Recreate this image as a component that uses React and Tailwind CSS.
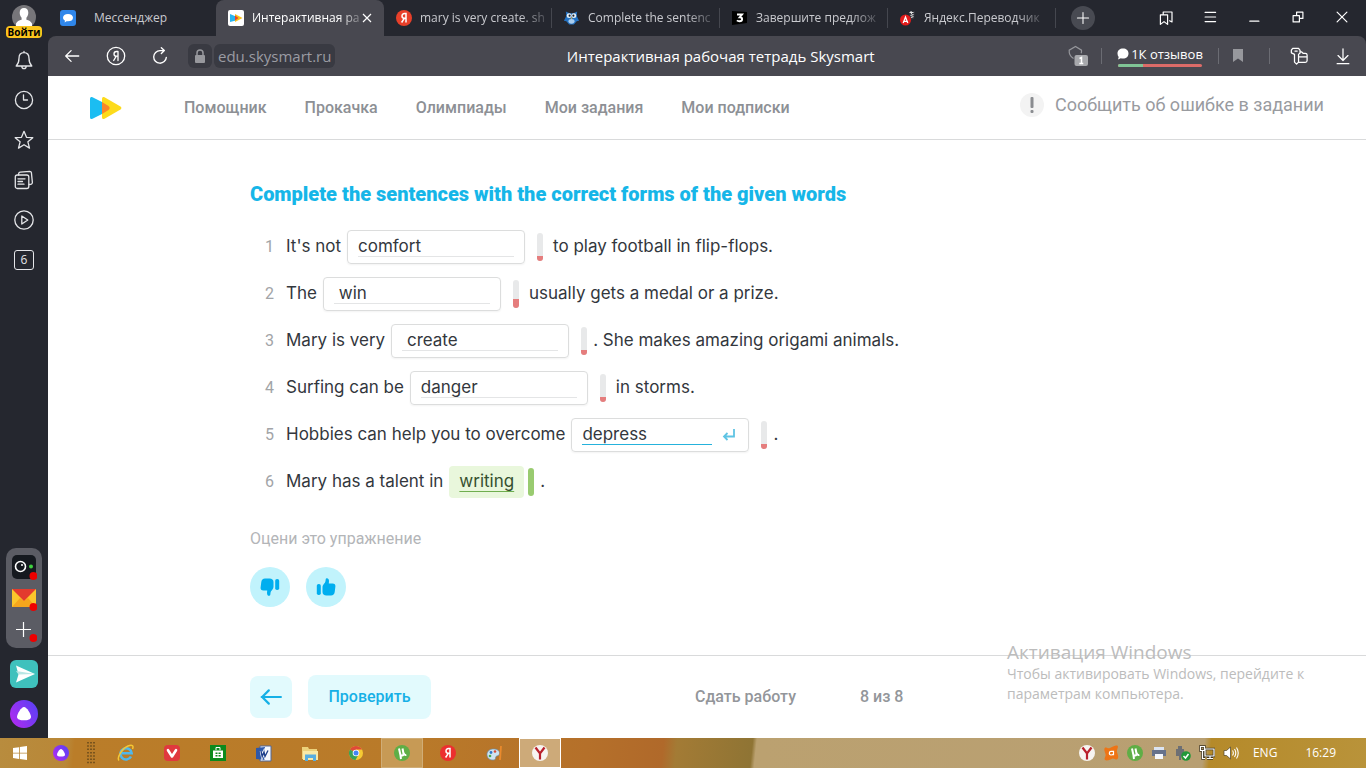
import { useState } from "react";

const sentences = [
  { before: "It's not", value: "comfort", after: "to play football in flip-flops.", score: "h-[5px]", afterGap: "ml-[10px]" },
  { before: "The", value: " win", after: "usually gets a medal or a prize.", score: "h-[9px]", afterGap: "ml-[10px]" },
  { before: "Mary is very", value: " create", after: ". She makes amazing origami animals.", score: "h-[5px]", afterGap: "ml-[6px]" },
  { before: "Surfing can be", value: "danger", after: "in storms.", score: "h-[5px]", afterGap: "ml-[10px]" },
  { before: "Hobbies can help you to overcome", value: "depress", after: ".", score: "h-[5px]", active: true, afterGap: "ml-[6px]" },
];

const tabs = [
  { title: "Мессенджер", icon: <MessengerIcon />, pinned: true },
  { title: "Интерактивная ра", icon: <SkyIcon />, active: true },
  { title: "mary is very create. sh", icon: <YandexIcon size={16} color="#e8402a" /> },
  { title: "Complete the sentenc", icon: <OwlIcon /> },
  { title: "Завершите предлож", icon: <ZnanijaIcon /> },
  { title: "Яндекс.Переводчик", icon: <TranslateIcon /> },
];

const nav = ["Помощник", "Прокачка", "Олимпиады", "Мои задания", "Мои подписки"];

function Line({ size = 20, width = 1.3, children, className = "" }) {
  return (
    <svg
      width={size}
      height={size}
      viewBox="0 0 20 20"
      fill="none"
      stroke="currentColor"
      strokeWidth={width}
      strokeLinejoin="round"
      strokeLinecap="round"
      className={className}
      aria-hidden="true"
    >
      {children}
    </svg>
  );
}

function MessengerIcon() {
  return (
    <svg width="16" height="16" viewBox="0 0 16 16">
      <rect width="16" height="16" rx="3" fill="#2f86ea" />
      <path d="M8 4c3 0 5 1.400 5 3.700S11 11.300 8 11.300c-.6 0-1 0-1.500-.1L4.700 12.500l.2-2C3.700 9.900 3 8.900 3 7.700 3 5.400 5 4 8 4z" fill="#fff" />
    </svg>
  );
}

function SkyIcon() {
  return (
    <svg width="16" height="16" viewBox="0 0 16 16">
      <rect width="16" height="16" rx="2" fill="#fff" />
      <path d="M2 4l6 2.500v4L2 12z" fill="#28b4ee" />
      <path d="M7 4l7.500 4L7 12z" fill="#f7c21c" />
      <path d="M7 5.500L10.500 8 7 10.500z" fill="#e8452c" />
    </svg>
  );
}

function YandexIcon({ size, color }) {
  return (
    <svg width={size} height={size} viewBox="0 0 16 16">
      <circle cx="8" cy="8" r="8" fill={color} />
      <path d="M10 12.500v-9H8.600C6.900 3.500 6 4.500 6 5.900c0 1.500.9 2.400 2.600 2.400H10M8.300 8.300L5.600 12.500" fill="none" stroke="#fff" strokeWidth="1.500" />
    </svg>
  );
}

function OwlIcon() {
  return (
    <svg width="18" height="16" viewBox="0 0 18 16">
      <path d="M3 1l4 2h4l4-2-.5 5L17 11l-2.500.5L11.500 15h-5L3.500 11.500 1 11l2.500-5z" fill="#2473c4" />
      <circle cx="6.500" cy="5.500" r="2.600" fill="#e8f1f8" />
      <circle cx="11.500" cy="5.500" r="2.600" fill="#e8f1f8" />
      <circle cx="7" cy="5.500" r="1.100" fill="#17202c" />
      <circle cx="11" cy="5.500" r="1.100" fill="#17202c" />
      <path d="M8 7.500h2L9 9.500z" fill="#e6b13a" />
      <ellipse cx="9" cy="11.500" rx="3.200" ry="2.500" fill="#a9cdee" />
    </svg>
  );
}

function ZnanijaIcon() {
  return (
    <svg width="17" height="16" viewBox="0 0 17 16">
      <path d="M1 1l15 1v11L1 15z" fill="#000" />
      <path d="M6 4.500h5L8.700 7.300c1.600 0 2.400.8 2.400 1.900 0 1.400-1.100 2.100-2.600 2.100-1.100 0-1.900-.3-2.600-.9" fill="none" stroke="#fff" strokeWidth="1.900" />
    </svg>
  );
}

function TranslateIcon() {
  return (
    <svg width="16" height="16" viewBox="0 0 16 16">
      <path d="M9 2l6-1-1 8-4 1z" fill="#34363e" />
      <path d="M9.500 2.500h4M11 1l.5 3M10.500 5.500l3-1M11 7.500l2.500-1" stroke="#e4e4e4" strokeWidth="1.100" fill="none" />
      <circle cx="5.500" cy="10" r="5.500" fill="#e21b1b" />
      <path d="M3.200 13l2.300-6 2.300 6M4 11.300h3" fill="none" stroke="#fff" strokeWidth="1.300" />
    </svg>
  );
}

function AliceIcon({ size }) {
  return (
    <svg width={size} height={size} viewBox="0 0 28 28">
      <defs>
        <linearGradient id={"alice" + size} x1="0" y1="0.800" x2="1" y2="0.200">
          <stop offset="0" stopColor="#b02bf0" />
          <stop offset="1" stopColor="#5b40f5" />
        </linearGradient>
      </defs>
      <circle cx="14" cy="14" r="14" fill={"url(#alice" + size + ")"} />
      <path d="M14 7c2.800 0 7 7 7 10 0 2.500-3.500 3.300-7 3.300S7 19.500 7 17c0-3 4.200-10 7-10z" fill="#fff" />
    </svg>
  );
}

function ThumbIcon({ className }) {
  return (
    <svg width="20" height="20" viewBox="0 0 20 20" fill="#00aeef" className={className} aria-hidden="true">
      <rect x="0.800" y="7" width="4" height="11" rx="1.800" />
      <path d="M6.500 10.500c0-3 2.700-4 3-6.500l.2-1.800C10 .6 13 .5 13 4l-.2 2.500h3.800c2 0 3 1.100 2.800 3l-.7 5.500c-.3 2.200-1.500 3.500-3.700 3.500h-4.500c-2.500 0-4-1.300-4-3.500z" />
    </svg>
  );
}

function Sidebar() {
  return (
    <aside className="flex w-12 shrink-0 flex-col items-center bg-[#25272f] text-[#e4e5e8]">
      <button type="button" className="flex h-10 flex-col items-center pt-[5px]" aria-label="Профиль">
        <svg width="24" height="22" viewBox="0 0 24 22">
          <circle cx="12" cy="12" r="12" fill="#77767a" />
          <path d="M12 3c2.800 0 4.300 2 4.300 4.700 0 2-.8 3.900-1.900 5v2c2.600.6 4.600 1.800 5.600 3.800V22H4v-3.500c1-2 3-3.200 5.600-3.800v-2c-1.100-1.100-1.900-3-1.900-5C7.700 5 9.200 3 12 3z" fill="#fff" />
        </svg>
        <span className="-mt-px w-9 rounded bg-[#fbc51d] text-center text-[10px] leading-3 font-bold text-black">Войти</span>
      </button>
      <button type="button" className="flex h-10 items-center" aria-label="Уведомления">
        <Line>
          <path d="M10 1.500v1.200M10 2.700c-3.500 0-5 2.500-5 5.500 0 4-1 6-2.800 7.800h15.600C16 14.200 15 12.200 15 8.200c0-3-1.500-5.500-5-5.500zM7.800 16c0 1.700.9 2.700 2.200 2.700s2.200-1 2.200-2.700" />
        </Line>
      </button>
      <button type="button" className="flex h-10 items-center" aria-label="История">
        <Line>
          <circle cx="10" cy="10" r="8.600" />
          <path d="M9.500 4.800V10h4" />
        </Line>
      </button>
      <button type="button" className="flex h-10 items-center" aria-label="Избранное">
        <Line>
          <path d="M10 1.300l2.500 6 6.300.4-4.900 4.100 1.600 6.300-5.500-3.400-5.500 3.400 1.600-6.300-4.900-4.100 6.300-.4z" />
        </Line>
      </button>
      <button type="button" className="flex h-10 items-center" aria-label="Коллекции">
        <Line>
          <rect x="1.300" y="5" width="13.500" height="13.500" rx="2" />
          <path d="M4 8.800h7M4 11.500h4.500M4 14.200h6M4.500 5l.2-1.500c.1-.8.7-1.300 1.500-1.400l9.500-.8c1 0 1.600.4 1.700 1.300l1 10c0 1-.5 1.500-1.400 1.700l-2 .2" />
        </Line>
      </button>
      <button type="button" className="flex h-10 items-center" aria-label="Видео">
        <Line>
          <circle cx="10" cy="10" r="9.200" />
          <path d="M7.800 6v8l6-4z" />
        </Line>
      </button>
      <button type="button" className="flex h-10 items-center" aria-label="Вкладки">
        <span className="flex size-5 items-center justify-center rounded-[3px] border border-[#e4e5e8] text-xs">6</span>
      </button>

      <div className="mt-auto flex w-9 flex-col items-center gap-[7px] rounded-[10px] bg-[#5b5c64] py-[6px]">
        <button type="button" aria-label="Камера">
          <svg width="26" height="26" viewBox="0 0 26 26" className="block">
            <rect x="1" y="1" width="24" height="24" rx="5" fill="#15191f" />
            <circle cx="9.500" cy="12.500" r="5" fill="none" stroke="#fff" strokeWidth="1.600" />
            <circle cx="11" cy="11" r="1" fill="#fff" />
            <circle cx="20" cy="12.500" r="2" fill="#3fd13f" />
            <circle cx="22.500" cy="22" r="4" fill="#ee0000" />
          </svg>
        </button>
        <button type="button" aria-label="Почта">
          <svg width="26" height="24" viewBox="0 0 26 24" className="block">
            <path d="M1 2h24v18H1z" fill="#fbc62b" />
            <path d="M1 20l8-9 4 3 4-3 8 9z" fill="#f5a61c" />
            <path d="M1 2h24L13 14z" fill="#e33b2e" />
            <circle cx="22.500" cy="20" r="4" fill="#ee0000" />
          </svg>
        </button>
        <button type="button" aria-label="Добавить">
          <svg width="26" height="24" viewBox="0 0 26 24" className="block">
            <path d="M12.500 4v15M5 11.500h15" stroke="#fff" strokeWidth="1.200" />
            <circle cx="22.500" cy="20" r="4" fill="#ee0000" />
          </svg>
        </button>
      </div>
      <button type="button" className="mt-3" aria-label="Мессенджер">
        <svg width="28" height="28" viewBox="0 0 28 28">
          <rect width="28" height="28" rx="6" fill="#3fc1bd" />
          <path d="M6 5.500l19 8.500L6 22.500l2.500-8z" fill="#fff" />
          <path d="M8.500 14.500L25 14 6 11z" fill="#b8e6e4" />
        </svg>
      </button>
      <button type="button" className="mt-3 mb-[10px]" aria-label="Алиса">
        <AliceIcon size={28} />
      </button>
    </aside>
  );
}

function TabStrip() {
  return (
    <div className="flex h-9 items-center bg-[#25272f] text-xs text-[#c9cacf]">
      <div className="flex h-full min-w-0 items-center">
        {tabs.map((tab) => (
          <div
            key={tab.title}
            className={
              tab.active
                ? "flex h-full w-[168px] items-center rounded-t-lg bg-[#484850] pr-3 pl-[11px] text-white"
                : tab.pinned
                  ? "flex h-5 w-[168px] items-center pr-2 pl-[11px]"
                  : "flex h-5 w-[168px] items-center border-r border-[#45474f] pr-2 pl-[11px]"
            }
          >
            <button type="button" className="flex min-w-0 flex-1 items-center gap-2">
              <span className="flex w-[17px] shrink-0 justify-center">{tab.icon}</span>
              <span
                className={
                  tab.pinned
                    ? "pl-[10px]"
                    : "text-left whitespace-nowrap [mask-image:linear-gradient(to_right,#000_80%,rgba(0,0,0,0.250))]"
                }
              >
                {tab.title}
              </span>
            </button>
            {tab.active && (
              <button type="button" className="ml-1 shrink-0" aria-label="Закрыть вкладку">
                <svg width="10" height="10" viewBox="0 0 10 10">
                  <path d="M1 1l8 8M9 1L1 9" stroke="#fff" strokeWidth="1.200" />
                </svg>
              </button>
            )}
          </div>
        ))}
      </div>
      <button type="button" className="ml-[15px] flex size-6 shrink-0 items-center justify-center rounded-full bg-[#484a52] text-white" aria-label="Новая вкладка">
        <Line size={16}>
          <path d="M10 3v14M3 10h14" />
        </Line>
      </button>
      <div className="ml-auto flex pr-[2px] text-white">
        <button type="button" className="flex w-11 justify-center" aria-label="Закладки">
          <Line size={16} width={1.5}>
            <path d="M3 6h9v12l-4.500-3.500L3 18zM6.500 6V2.500h11V15l-3 -1.500" />
          </Line>
        </button>
        <button type="button" className="flex w-11 justify-center" aria-label="Меню">
          <Line size={14} width={1.7}>
            <path d="M3 3.500h15M3 10h15M3 16.500h15" />
          </Line>
        </button>
        <button type="button" className="flex w-11 justify-center" aria-label="Свернуть">
          <Line size={14} width={1.7}>
            <path d="M4 16h13" />
          </Line>
        </button>
        <button type="button" className="flex w-11 justify-center" aria-label="Восстановить">
          <Line size={14} width={1.7}>
            <path d="M3 8h9v9H3zM8 8V3h9v9h-5" />
          </Line>
        </button>
        <button type="button" className="flex w-11 justify-center" aria-label="Закрыть">
          <Line size={14} width={1.7}>
            <path d="M3 3l14 14M17 3L3 17" />
          </Line>
        </button>
      </div>
    </div>
  );
}

function Toolbar() {
  return (
    <div className="bg-[#25272f]">
      <div className="flex h-10 items-center rounded-t-lg bg-[#484850] pl-[2px] text-white">
        <button type="button" className="flex w-11 justify-center" aria-label="Назад">
          <Line size={18} width={1.4}>
            <path d="M17.500 10H3M9 4l-6 6 6 6" />
          </Line>
        </button>
        <button type="button" className="flex w-11 justify-center" aria-label="Яндекс">
          <Line size={20}>
            <circle cx="10" cy="10" r="8.700" />
            <path d="M12 14.500v-9h-1.500C8.900 5.500 8 6.500 8 7.900c0 1.500.9 2.300 2.500 2.300H12M10.300 10.200l-2.600 4.300" />
          </Line>
        </button>
        <button type="button" className="flex w-11 justify-center" aria-label="Обновить">
          <Line size={18} width={1.500}>
            <path d="M17 11.500a7 7 0 1 1-7-7.500h4M11.500 0.800L14.800 4l-3.300 3.200" />
          </Line>
        </button>
        <span className="ml-[6px] flex h-6 w-6 items-center justify-center rounded-md bg-[#393a42]">
          <svg width="12" height="14" viewBox="0 0 12 14" fill="#97989d">
            <rect x="1" y="6" width="10" height="8" rx="1" />
            <path d="M3 6V4a3 3 0 0 1 6 0v2" fill="none" stroke="#97989d" strokeWidth="1.500" />
          </svg>
        </span>
        <button type="button" className="ml-[2px] h-6 rounded-md bg-[#393a42] px-1 text-[15px] leading-6 text-[#9b9ca3]">edu.skysmart.ru</button>
        <div className="min-w-0 flex-1 truncate pl-[38px] text-center text-[15px]">Интерактивная рабочая тетрадь Skysmart</div>
        <button type="button" className="flex" aria-label="Защита">
          <svg width="21" height="22" viewBox="0 0 21 22">
            <path d="M5.500 13.500C2.500 11.500 .9 8.500 1.200 5.200L7.500 1.500l6 3.700c.1 1 .1 2-.3 3" fill="none" stroke="#96979c" strokeWidth="1.200" />
            <rect x="6.500" y="10" width="13.500" height="11" rx="2" fill="#a7a8ac" />
            <path d="M11.500 13.500l2-1V19M11.300 18.500h4" fill="none" stroke="#fff" strokeWidth="1.500" />
          </svg>
        </button>
        <span className="mx-3 h-4 w-px bg-[#6b6c73]" />
        <button type="button" className="mx-1 flex w-[84px] flex-col items-center text-[13px] leading-4">
          <span className="flex items-center gap-[2px] font-medium whitespace-nowrap">
            <svg width="12" height="12" viewBox="0 0 12 12">
              <path d="M6 .5c3.300 0 5.500 2 5.500 5s-2.200 5-5.500 5c-.8 0-1.500-.1-2.200-.3L1 11.500 1.700 9C.9 8 .5 6.900.5 5.500c0-3 2.200-5 5.500-5z" fill="#fff" />
            </svg>
            1К отзывов
          </span>
          <span className="mt-[2px] flex h-[3px] w-full overflow-hidden rounded-full bg-[#dc6b68]">
            <span className="w-[30%] bg-[#80c496]" />
          </span>
        </button>
        <span className="mx-3 h-4 w-px bg-[#6b6c73]" />
        <button type="button" className="mr-[14px] ml-[2px]" aria-label="Добавить закладку">
          <svg width="10" height="14" viewBox="0 0 10 14">
            <path d="M0 0h10v13L5 9.500 0 13z" fill="#97989d" />
          </svg>
        </button>
        <span className="mx-3 h-4 w-px bg-[#6b6c73]" />
        <button type="button" className="ml-2" aria-label="Пароли">
          <Line size={18} width={1.4}>
            <path d="M3 1.500h6.500l1.700 2.200v3L9.500 8.200v8.600L7.300 19 5 16.800V8.200L1.500 6.500v-3zM5.500 4.500h2.500M11 5.500h2l1.500 1.500h2.500c1.300 0 2 .7 2 2v6c0 1.300-.7 2-2 2h-7.500M9.500 11h9.500" />
          </Line>
        </button>
        <button type="button" className="mr-[14px] ml-[26px]" aria-label="Загрузки">
          <Line size={18} width={1.4}>
            <path d="M10 2v12.500M4.500 9.500l5.500 5.500 5.500-5.500M3.500 18.500h13" />
          </Line>
        </button>
      </div>
    </div>
  );
}

function Gauge({ score }) {
  return (
    <span className="ml-3 flex h-7 w-[6px] shrink-0 items-end overflow-hidden rounded-full bg-[#e8e9ea]">
      <span className={"w-full bg-[#e57d7d] " + score} />
    </span>
  );
}

function Exercise() {
  const [answers, setAnswers] = useState(sentences.map((s) => s.value));

  const change = (index, value) => {
    setAnswers(answers.map((a, i) => (i === index ? value : a)));
  };

  return (
    <section className="flex-1 bg-white px-4 pt-[42px] lg:pl-[202px]">
      <h1 className="text-xl leading-6 font-black text-[#16b6e8]">
        Complete the sentences with the correct forms of the given words
      </h1>
      <ol className="mt-6 flex flex-col gap-[13px] font-['Inter','Liberation_Sans',sans-serif] text-[17px] text-[#33373d]">
        {sentences.map((s, i) => (
          <li key={s.before} className="flex h-[34px] items-center whitespace-nowrap">
            <span className="w-6 text-right font-['Roboto','Liberation_Sans',sans-serif] text-base text-[#a2a4a7]">{i + 1}</span>
            <label htmlFor={"answer" + i} className="ml-3">{s.before}</label>
            <span className="ml-[6px] flex h-[34px] w-[178px] items-center rounded border border-[#dcdddd] px-[10px] shadow-xs">
              <input
                id={"answer" + i}
                type="text"
                value={answers[i]}
                onChange={(e) => change(i, e.target.value)}
                className={
                  s.active
                    ? "h-5 w-[130px] border-b border-[#25b2dc] outline-none"
                    : "h-5 w-full border-b border-[#e4e5e6] outline-none"
                }
              />
              {s.active && (
                <svg width="14" height="14" viewBox="0 0 14 14" fill="none" stroke="#5fc4e4" strokeWidth="1.800" className="ml-[10px]">
                  <path d="M12 1v7.500H2M5.500 5L2 8.500 5.500 12" />
                </svg>
              )}
            </span>
            <Gauge score={s.score} />
            <span className={s.afterGap}>{s.after}</span>
          </li>
        ))}
        <li className="flex h-[34px] items-center">
          <span className="w-6 text-right font-['Roboto','Liberation_Sans',sans-serif] text-base text-[#a2a4a7]">6</span>
          <span className="ml-3">Mary has a talent in</span>
          <span className="ml-[6px] rounded bg-[#e9f7dc] px-[10px] py-[3px] text-[#35502f] underline decoration-[#6fae4e] decoration-1 underline-offset-4">writing</span>
          <span className="ml-1 h-7 w-[6px] rounded-full bg-[#99cb70]" />
          <span className="ml-[6px]">.</span>
        </li>
      </ol>
      <p className="mt-7 text-base leading-6 text-[#b3b5b8]">Оцени это упражнение</p>
      <div className="mt-4 flex gap-4 pb-4">
        <button type="button" className="flex size-10 items-center justify-center rounded-full bg-[#c1f3fc]" aria-label="Не нравится">
          <ThumbIcon className="rotate-180" />
        </button>
        <button type="button" className="flex size-10 items-center justify-center rounded-full bg-[#c1f3fc]" aria-label="Нравится">
          <ThumbIcon />
        </button>
      </div>
    </section>
  );
}

function Page() {
  return (
    <main className="flex flex-1 flex-col bg-white font-['Roboto','Liberation_Sans',sans-serif]">
      <header className="flex h-16 items-center border-b border-[#d9dadb] pr-[42px] pl-[42px]">
        <a href="#home" aria-label="Skysmart">
          <svg width="32" height="24" viewBox="0 0 32 24">
            <path d="M0 3c0-2 1-2.500 2.500-1.800L12 6v12l-9.500 4.800C1 23.500 0 23 0 21z" fill="#1bbdf2" />
            <path d="M12 3c0-2 1-2.500 2.500-1.800L30.500 10.500c1.200.8 1.200 2.200 0 3L14.500 22.800C13 23.500 12 23 12 21z" fill="#fddb1c" />
            <path d="M12 6l6.500 4c1.500 1 1.500 3 0 4L12 18z" fill="#f9872a" />
          </svg>
        </a>
        <nav className="ml-[62px] flex gap-[38px] text-base font-medium text-[#8d9095]">
          {nav.map((item) => (
            <a key={item} href="#nav" className="whitespace-nowrap">{item}</a>
          ))}
        </nav>
        <button type="button" className="-mt-[6px] ml-auto flex items-center gap-[11px] text-lg whitespace-nowrap text-[#999b9f]">
          <span className="flex size-6 items-center justify-center rounded-full bg-[#f3f3f3]">
            <svg width="4" height="16" viewBox="0 0 4 16" fill="#8a8c90">
              <rect x="0.500" width="3" height="11" rx="1" />
              <rect x="0.500" y="13" width="3" height="3" rx="1" />
            </svg>
          </span>
          Сообщить об ошибке в задании
        </button>
      </header>
      <Exercise />
      <footer className="relative flex h-[83px] items-center border-t border-[#d9dadb] px-4 font-medium text-[#93969a] lg:pl-[202px]">
        <button type="button" className="flex size-[42px] items-center justify-center rounded-lg bg-[#e2fafd] text-[#16b0e6]" aria-label="Назад">
          <Line size={22} width={2}>
            <path d="M19 10H1.500M8 4l-6 6 6 6" />
          </Line>
        </button>
        <button type="button" className="ml-4 h-11 w-[123px] rounded-lg bg-[#e2fafd] text-[#16b0e6]">Проверить</button>
        <button type="button" className="ml-[264px]">Сдать работу</button>
        <span className="ml-16">8 из 8</span>
        <div className="absolute -top-4 right-[42px] w-[317px] font-['Open_Sans','Liberation_Sans',sans-serif] text-sm leading-5 font-normal text-[#bcbcbc]">
          <p className="text-[19px] leading-6">Активация Windows</p>
          <p>
            Чтобы активировать Windows, перейдите к<br />
            параметрам компьютера.
          </p>
        </div>
      </footer>
    </main>
  );
}

const apps = [
  {
    name: "Internet Explorer",
    icon: (
      <svg width="18" height="18" viewBox="0 0 18 18" fill="none">
        <path d="M14 12.500a5.600 5.600 0 1 1 .6-3.300H5" stroke="#4fb8ec" strokeWidth="2.600" />
        <path d="M2 16.500C-.5 14 5 4.500 11 2c4-1.700 6-.5 4.500 3" stroke="#f5c733" strokeWidth="1.500" />
      </svg>
    ),
  },
  {
    name: "Vivaldi",
    icon: (
      <svg width="16" height="16" viewBox="0 0 16 16">
        <rect width="16" height="16" rx="4" fill="#e0393e" />
        <path d="M4 5.200l4 6.300 4-6.300" fill="none" stroke="#fff" strokeWidth="2.600" strokeLinecap="round" strokeLinejoin="round" />
      </svg>
    ),
  },
  {
    name: "Магазин",
    icon: (
      <svg width="16" height="18" viewBox="0 0 16 18">
        <path d="M0 1h16v16H0z" fill="#0c8a1d" />
        <path d="M3 6.500h10V14H3z" fill="#fff" />
        <path d="M6 6V3.500h4V6" stroke="#fff" fill="none" />
        <path d="M5.500 8.500h2v1.500h-2zM8.500 8.500h2.200v1.500H8.500zM5.500 11h2v1.500h-2zM8.500 11h2.200v1.500H8.500z" fill="#0c8a1d" />
      </svg>
    ),
  },
  {
    name: "Word",
    icon: (
      <svg width="16" height="17" viewBox="0 0 16 17">
        <path d="M4 1h11v15H4z" fill="#f4f7fc" stroke="#51699c" />
        <path d="M0 3l9-1v13l-9-1z" fill="#2f58a8" />
        <path d="M5 6l1.200 5.500L8 7l1 4.500L12 5.500" stroke="#fff" strokeWidth="2.600" fill="none" />
        <path d="M5 6l1.200 5.500L8 7l1 4.500L12 5.500" stroke="#1d3f8c" strokeWidth="1.400" fill="none" />
      </svg>
    ),
  },
  {
    name: "Проводник",
    icon: (
      <svg width="18" height="17" viewBox="0 0 18 17">
        <path d="M1 2h6l1 2h8v10H1z" fill="#ecd27b" />
        <path d="M2 6h15v9H2z" fill="#f9e9a6" />
        <path d="M4 16V9.500h11V16h-3v-3H7v3z" fill="#58aee0" />
      </svg>
    ),
  },
  {
    name: "Chrome",
    icon: (
      <svg width="16" height="16" viewBox="0 0 16 16">
        <circle cx="8" cy="8" r="7" fill="#f6ca33" />
        <path d="M8 8L1.900 4.500A7 7 0 0 1 14.100 4.500L8 4.500z" fill="#df4a38" />
        <path d="M1.900 4.500A7 7 0 0 0 7.500 15L10 10.500 8 8z" fill="#3aa257" />
        <circle cx="8" cy="8" r="3.300" fill="#fff" />
        <circle cx="8" cy="8" r="2.500" fill="#4285f4" />
      </svg>
    ),
  },
  { name: "uTorrent", icon: <TorrentIcon />, open: "border-[#d0ad77] bg-[#c79a55]" },
  { name: "Яндекс", icon: <YandexIcon size={16} color="#ec2f2f" /> },
  {
    name: "Paint",
    icon: (
      <svg width="17" height="17" viewBox="0 0 17 17">
        <path d="M7.500 4c4 0 6.500 2 6 5-.4 2-2.500 1.500-3.500 2.500-1 1.200.5 3.500-3 3.500S1 13 1 9.500 4 4 7.500 4z" fill="#cfe3f0" stroke="#688ca6" strokeWidth=".7" />
        <circle cx="5" cy="7.500" r="1.400" fill="#3278c8" />
        <circle cx="9" cy="6.500" r="1.300" fill="#d94b35" />
        <circle cx="4" cy="11" r="1.300" fill="#49a84a" />
        <path d="M15 1l-1 14" stroke="#ea8a2c" strokeWidth="1.800" />
      </svg>
    ),
  },
  { name: "Яндекс.Браузер", icon: <BrowserIcon />, open: "border-white bg-[#cdaa79]" },
];

function TorrentIcon() {
  return (
    <svg width="16" height="16" viewBox="0 0 16 16">
      <circle cx="8" cy="8" r="8" fill="#5fae46" />
      <path d="M5 3.500l1.300 6c.4 1.500 3.500 1.500 3.200-.8L8.500 3.500M9.700 8c.4 1.800 1.300 2.200 2.600 1.800M6.300 9L7 14" fill="none" stroke="#fff" strokeWidth="2" />
    </svg>
  );
}

function BrowserIcon() {
  return (
    <svg width="16" height="16" viewBox="0 0 16 16">
      <circle cx="8" cy="8" r="8" fill="#f7f4f0" />
      <path d="M3.500 2.500L8 8.500l4.500-6M8 8v6.500" fill="none" stroke="#b9202b" strokeWidth="2.200" />
    </svg>
  );
}

const tray = [
  { name: "Яндекс.Браузер", icon: <BrowserIcon /> },
  {
    name: "Avast",
    icon: (
      <svg width="16" height="16" viewBox="0 0 16 16">
        <path d="M2 2.500C3.500 2 5 3.800 7 3S12 .2 14.500 .7c1.300 1.300-.8 3.800-.6 5.800s2.300 4.500.8 7.300c-1.500 1.700-3.200-.6-5-.4s-5.200 3.300-7.700 1.700C.7 13.500 3 11.500 2.600 9.500S.3 4.500 2 2.500z" fill="#ee7415" />
        <path d="M10.500 10.300V6.300H8C6 6.300 5.600 10 8 10c1.200 0 2-.5 2.500-1.300" fill="none" stroke="#fff" strokeWidth="1.200" />
      </svg>
    ),
  },
  { name: "uTorrent", icon: <TorrentIcon /> },
  {
    name: "Принтер",
    icon: (
      <svg width="16" height="16" viewBox="0 0 16 16">
        <path d="M3 2h10v4H3z" fill="#dbe4f2" />
        <path d="M1 5h14v6H1z" fill="#66728b" />
        <path d="M4 9h8v5H4z" fill="#f4f7fc" />
      </svg>
    ),
  },
  {
    name: "Безопасное извлечение",
    icon: (
      <svg width="16" height="16" viewBox="0 0 16 16">
        <path d="M3 1h4v3h2v7H6v4H4v-4H1V4h2z" fill="#6d6f74" />
        <circle cx="11" cy="11" r="4.800" fill="#23983a" />
        <path d="M8.500 11l2 2 3-4" fill="none" stroke="#fff" strokeWidth="1.500" />
      </svg>
    ),
  },
  {
    name: "Сеть",
    icon: (
      <svg width="16" height="16" viewBox="0 0 16 16" fill="none">
        <path d="M6 4h9v7H6zM8 13.500h6M11 11v2M1.500 1.500h4v4h-4zM3.500 5.500v8H6" stroke="#3c3420" strokeWidth="2.600" />
        <path d="M6 4h9v7H6zM8 13.500h6M11 11v2M1.500 1.500h4v4h-4zM3.500 5.500v8H6" stroke="#fff" strokeWidth="1.200" />
      </svg>
    ),
  },
  {
    name: "Громкость",
    icon: (
      <svg width="16" height="16" viewBox="0 0 16 16" fill="none">
        <path d="M1 5.500h2.500L7.500 2v12l-4-3.500H1z" fill="#fff" stroke="#4b4027" strokeWidth=".7" />
        <path d="M9.500 5.500c1 1.500 1 3.500 0 5M11.500 4c1.600 2.500 1.600 5.500 0 8M13.500 2.500c2.200 3.500 2.200 7.500 0 11" stroke="#fff" strokeWidth="1.100" />
      </svg>
    ),
  },
];

function Taskbar() {
  return (
    <footer className="flex h-[30px] items-center bg-[linear-gradient(96deg,#b88c3e_0%,#b98737_5%,#ba7d29_5.500%,#b97a29_30%,#b5702a_43%,#b0692a_48.500%,#a37b35_49.500%,#8f7434_55%,#bba170_55.300%,#b89f72_88%,#b58a2a_88.500%,#b9933a_100%)] text-xs text-white">
      <button type="button" className="ml-3 flex w-4 justify-center" aria-label="Пуск">
        <svg width="14" height="14" viewBox="0 0 14 14" fill="#fff">
          <path d="M0 2l6-.8v5.500H0zM6.800 1.100L14 0v6.700H6.800zM0 7.400h6v5.500L0 12zM6.800 7.400H14V14l-7.200-1z" />
        </svg>
      </button>
      <button type="button" className="ml-[25px]" aria-label="Алиса">
        <AliceIcon size={16} />
      </button>
      <svg width="8" height="22" viewBox="0 0 8 22" className="mr-[10px] ml-[18px]" aria-hidden="true">
        <path d="M1 0v22M4 0v22M7 0v22" stroke="#4f3a17" strokeWidth="1.200" strokeDasharray="1.500 1.800" />
      </svg>
      <div className="flex h-full gap-1">
        {apps.map((app) => (
          <button
            key={app.name}
            type="button"
            aria-label={app.name}
            className={"flex h-full w-[42px] items-center justify-center border " + (app.open || "border-transparent")}
          >
            {app.icon}
          </button>
        ))}
      </div>
      <div className="ml-auto flex gap-2">
        {tray.map((item) => (
          <button key={item.name} type="button" aria-label={item.name}>
            {item.icon}
          </button>
        ))}
      </div>
      <button type="button" className="ml-[14px]">ENG</button>
      <time className="mr-[30px] ml-7">16:29</time>
    </footer>
  );
}

export default function App() {
  return (
    <div className="flex min-h-screen flex-col font-['Open_Sans','Liberation_Sans',sans-serif]">
      <div className="flex flex-1">
        <Sidebar />
        <div className="flex min-w-0 flex-1 flex-col">
          <TabStrip />
          <Toolbar />
          <Page />
        </div>
      </div>
      <Taskbar />
    </div>
  );
}
